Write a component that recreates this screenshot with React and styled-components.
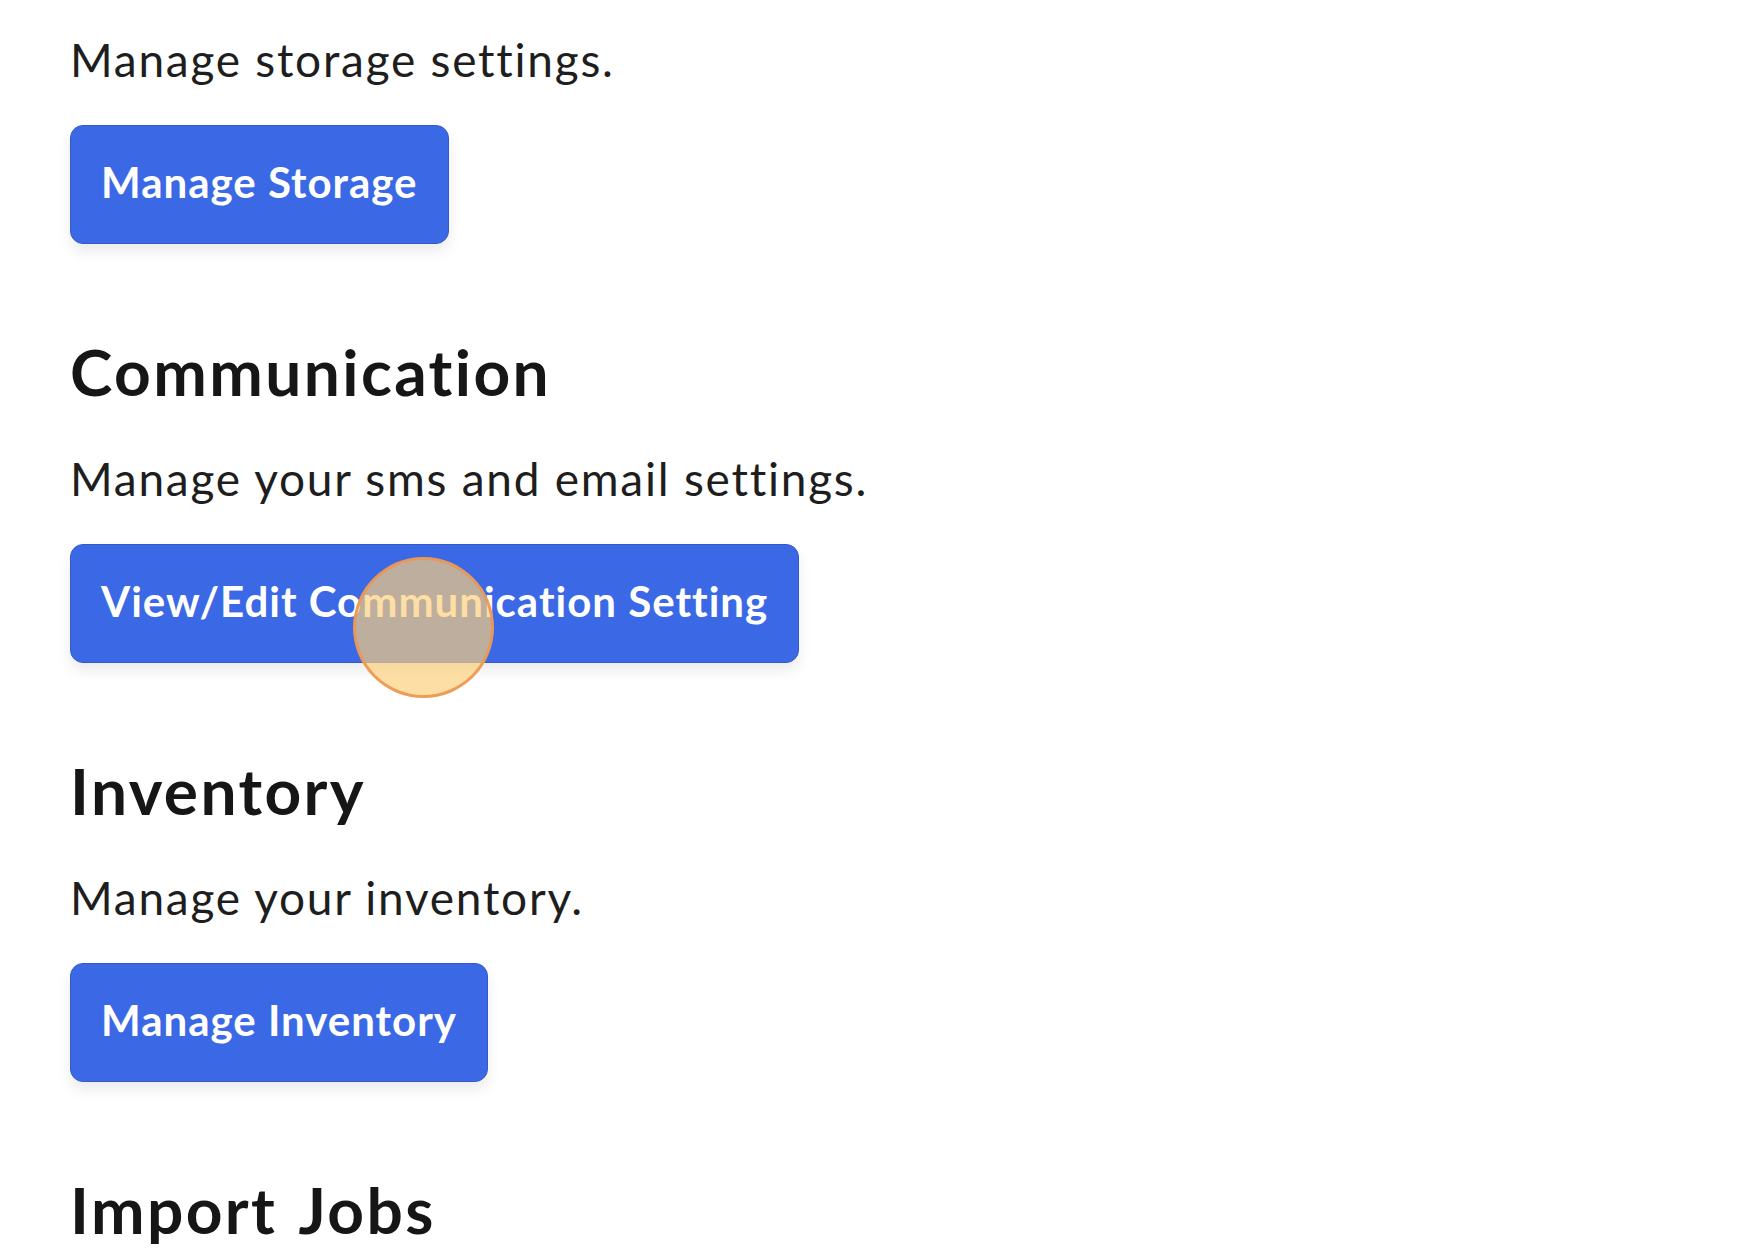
import React from 'react';
import styled, { createGlobalStyle } from 'styled-components';

const GlobalStyle = createGlobalStyle`
    html, body {
        margin: 0;
        padding: 0;
        background: #ffffff;
    }
    body {
        font-family: Lato, "Open Sans", Arial, sans-serif;
        color: #1c1c1c;
        -webkit-font-smoothing: antialiased;
    }
`;

const sections = [
    { title: 'Communication', text: 'Manage your sms and email settings.', action: 'View/Edit Communication Setting' },
    { title: 'Inventory', text: 'Manage your inventory.', action: 'Manage Inventory' },
    { title: 'Import Jobs' },
];

export default function App() {
    return (
        <Page>
            <GlobalStyle />
            <Section first>
                <Description>Manage storage settings.</Description>
                <ActionButton>Manage Storage</ActionButton>
            </Section>

            {sections.map((s) => (
                <Section key={s.title}>
                    <Heading>{s.title}</Heading>
                    {s.text && <Description>{s.text}</Description>}
                    {s.action && <ActionButton>{s.action}</ActionButton>}
                </Section>
            ))}

            <Cursor />
        </Page>
    );
}

const Page = styled.div`
    position: relative;
    min-height: 1258px;
    padding: 30px 0 0 70px;
    box-sizing: border-box;
    overflow: hidden;
`;

const Section = styled.section`
    display: flex;
    flex-direction: column;
    align-items: flex-start;
    margin-top: ${(p) => (p.first ? '0' : '90px')};
`;

const Heading = styled.h2`
    margin: 0 0 39px;
    font-size: 64px;
    line-height: 76px;
    font-weight: 700;
    color: #161616;
    letter-spacing: 2.4px;
    word-spacing: 5px;
`;

const Description = styled.p`
    margin: 0 0 35px;
    font-size: 46px;
    line-height: 60px;
    font-weight: 400;
    color: #1e1e1e;
    letter-spacing: 1.75px;
`;

const ActionButton = styled.button`
    display: inline-flex;
    align-items: center;
    height: 119px;
    box-sizing: border-box;
    padding: 36px 30px 41px 30px;
    border: 1px solid #3459c8;
    border-radius: 13px;
    background: #3b69e5;
    color: #ffffff;
    font-family: Lato, "Open Sans", Arial, sans-serif;
    font-size: 42px;
    line-height: 42px;
    font-weight: 700;
    letter-spacing: 1px;
    box-shadow: 0 8px 14px rgba(0, 0, 0, 0.08);
    cursor: pointer;
`;

const Cursor = styled.div`
    position: absolute;
    left: 353px;
    top: 557px;
    width: 141px;
    height: 141px;
    box-sizing: border-box;
    border-radius: 50%;
    border: 3px solid rgba(236, 150, 80, 0.9);
    background: rgba(252, 206, 122, 0.68);
    pointer-events: none;
`;
